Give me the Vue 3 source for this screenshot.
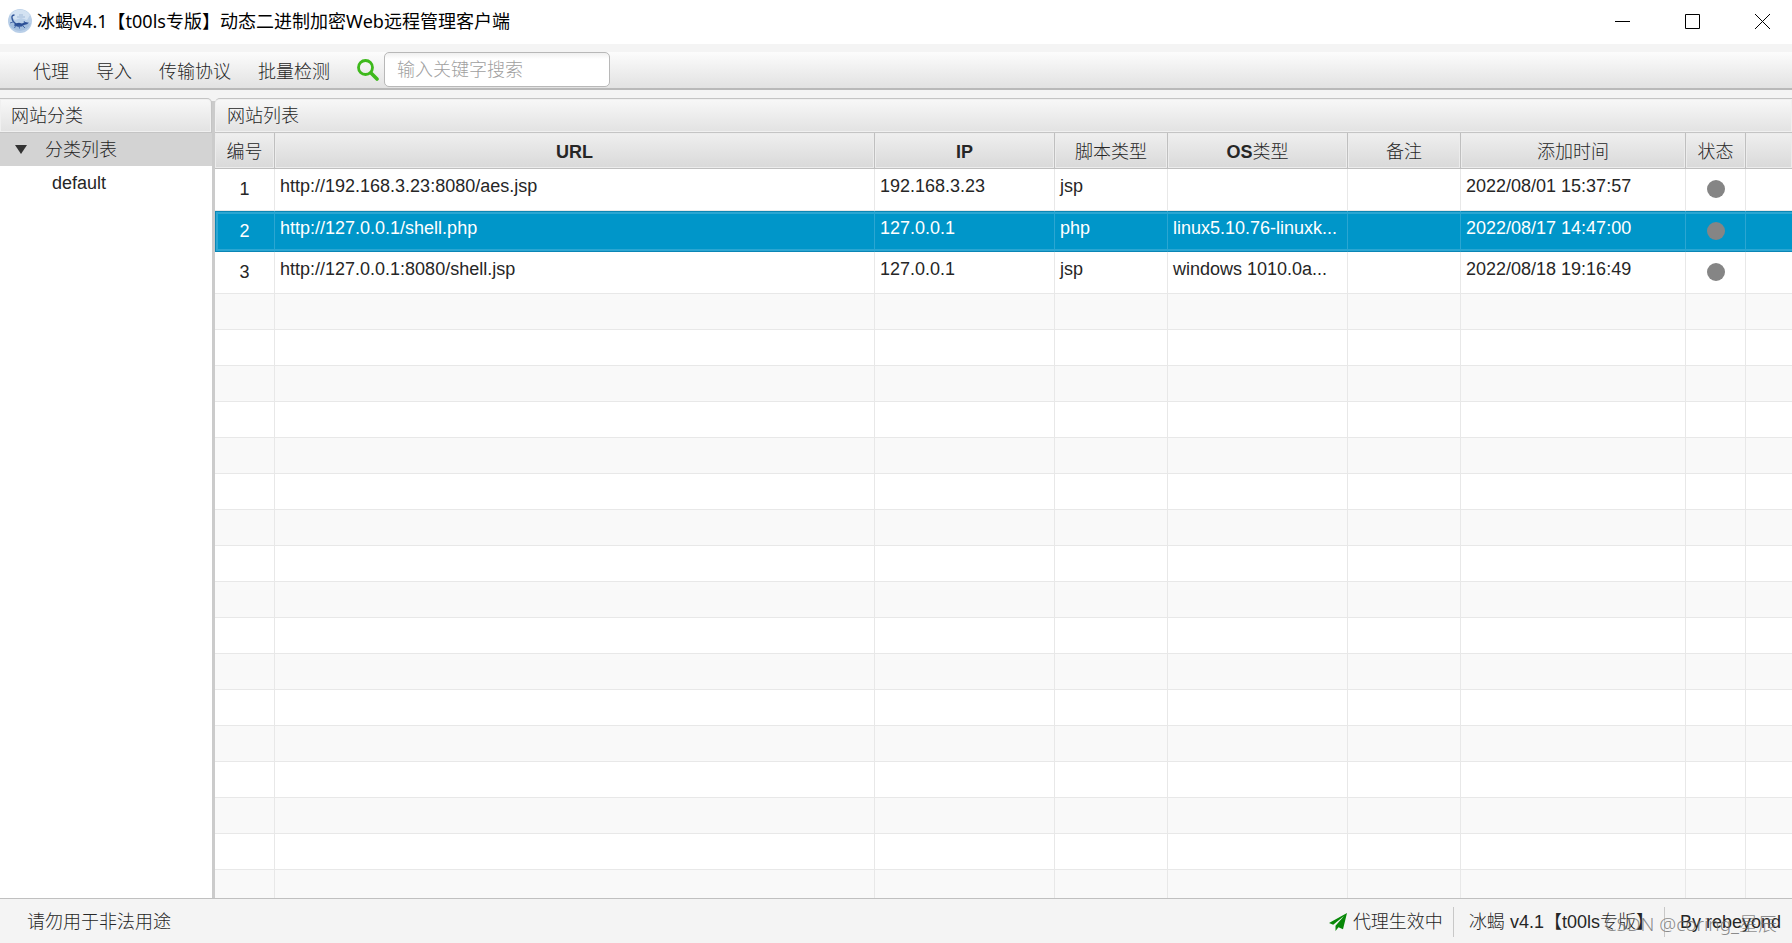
<script setup>
import { ref } from 'vue'

const menus = ['代理', '导入', '传输协议', '批量检测']
const keyword = ref('')
const selected = ref(2)

const columns = [
  { key: 'id', latin: '', text: '编号' },
  { key: 'url', latin: 'URL', text: '' },
  { key: 'ip', latin: 'IP', text: '' },
  { key: 'script', latin: '', text: '脚本类型' },
  { key: 'os', latin: 'OS', text: '类型' },
  { key: 'note', latin: '', text: '备注' },
  { key: 'time', latin: '', text: '添加时间' },
  { key: 'status', latin: '', text: '状态' },
  { key: 'rest', latin: '', text: '' }
]

const sites = [
  { id: 1, url: 'http://192.168.3.23:8080/aes.jsp', ip: '192.168.3.23', script: 'jsp', os: '', note: '', time: '2022/08/01 15:37:57' },
  { id: 2, url: 'http://127.0.0.1/shell.php', ip: '127.0.0.1', script: 'php', os: 'linux5.10.76-linuxk...', note: '', time: '2022/08/17 14:47:00' },
  { id: 3, url: 'http://127.0.0.1:8080/shell.jsp', ip: '127.0.0.1', script: 'jsp', os: 'windows 1010.0a...', note: '', time: '2022/08/18 19:16:49' }
]
const emptyRows = 17
</script>

<template>
  <div class="window">
    <header class="titlebar">
      <svg class="logo" viewBox="0 0 24 24" aria-hidden="true">
        <circle cx="12" cy="12" r="12" fill="#b9cfe8" />
        <path d="M2 6a12 12 0 0 1 20 0l-3 5-6-2-6 2z" fill="#d3e2f2" />
        <path d="M1 15q5-2 10 0t12-1a12 12 0 0 1-22 1z" fill="#a3bede" />
        <path d="M9 8h8M11 6h4" stroke="#8eabd0" stroke-width=".7" />
        <path d="M6.500 6Q3.500 6 4 9q.5 4 4 6" fill="none" stroke="#34589c" stroke-width="1.400" />
        <path d="M7 14.500l4-.8 3 .8 3-1.500 4 .8-2 1.500-3 .6-2 1.600-4 .2-4-1.200z" fill="#2b4f96" />
        <path d="M8 16l-1.500 3M11 16l.5 3.500M14 16l3 3M17 14l-1-2M5 13l-3 1" fill="none" stroke="#3b5fa2" stroke-width=".9" />
      </svg>
      <h1 class="title">冰蝎v4.1【t00ls专版】动态二进制加密Web远程管理客户端</h1>
      <div class="controls">
        <button class="control" type="button" aria-label="最小化">
          <svg viewBox="0 0 15 15"><path d="M0 7.500h15" /></svg>
        </button>
        <button class="control" type="button" aria-label="最大化">
          <svg viewBox="0 0 15 15"><path d="M.5.5h14v14H.5z" /></svg>
        </button>
        <button class="control" type="button" aria-label="关闭">
          <svg viewBox="0 0 15 15"><path d="M0 0l15 15M15 0L0 15" /></svg>
        </button>
      </div>
    </header>

    <nav class="toolbar">
      <button v-for="m in menus" :key="m" class="menu" type="button">{{ m }}</button>
      <label class="search">
        <svg class="search-icon" viewBox="0 0 22 22" role="img" aria-label="搜索">
          <circle cx="8.500" cy="8.500" r="7" fill="none" stroke="#3eb91c" stroke-width="2.800" />
          <path d="M14 14l6 6" stroke="#3eb91c" stroke-width="3.600" stroke-linecap="round" />
        </svg>
        <input v-model="keyword" class="search-input" type="text" placeholder="输入关键字搜索" />
      </label>
    </nav>

    <main class="content">
      <aside class="pane categories">
        <h2 class="pane-title">网站分类</h2>
        <ul class="tree">
          <li>
            <div class="tree-row root">
              <svg class="arrow" viewBox="0 0 12 9" aria-hidden="true"><path d="M0 0h12L6 9z" fill="#333" /></svg>
              <span>分类列表</span>
            </div>
            <ul class="tree">
              <li class="tree-row leaf">default</li>
            </ul>
          </li>
        </ul>
      </aside>

      <section class="pane sites">
        <h2 class="pane-title">网站列表</h2>
        <div class="table-area">
          <table>
            <colgroup>
              <col v-for="c in columns" :key="c.key" :class="'col-' + c.key" />
            </colgroup>
            <thead>
              <tr>
                <th v-for="c in columns" :key="c.key" scope="col"><b v-if="c.latin">{{ c.latin }}</b>{{ c.text }}</th>
              </tr>
            </thead>
            <tbody>
              <tr v-for="s in sites" :key="s.id" class="site" :class="{ selected: s.id === selected }" @click="selected = s.id">
                <td class="middle">{{ s.id }}</td>
                <td>{{ s.url }}</td>
                <td>{{ s.ip }}</td>
                <td>{{ s.script }}</td>
                <td>{{ s.os }}</td>
                <td>{{ s.note }}</td>
                <td>{{ s.time }}</td>
                <td class="middle"><span class="dot"></span></td>
                <td></td>
              </tr>
              <tr v-for="n in emptyRows" :key="'e' + n" class="empty">
                <td v-for="c in columns" :key="c.key"></td>
              </tr>
            </tbody>
          </table>
        </div>
      </section>
    </main>

    <footer class="statusbar">
      <span class="notice">请勿用于非法用途</span>
      <span class="proxy">
        <svg class="plane" viewBox="0 0 18 18" aria-hidden="true">
          <path d="M18 0L0 10l4.200 1.800L15 3 6.500 12.800V18l3-3.800 4.500 2z" fill="#078807" />
        </svg>
        代理生效中
      </span>
      <span class="version">冰蝎 v4.1【t00ls专版】</span>
      <span class="author">By rebeyond</span>
      <span class="watermark">CSDN @coring_星辰</span>
    </footer>
  </div>
</template>

<style>
body {
  margin: 0;
}
</style>

<style scoped>
* {
  box-sizing: border-box;
}

.window {
  display: flex;
  flex-direction: column;
  height: 100vh;
  overflow: hidden;
  background: #f4f4f4;
  color: #262626;
  font: 300 18px/24px "Liberation Sans", "Noto Sans CJK SC", sans-serif;
}

button,
input {
  color: inherit;
  font: inherit;
}

h1,
h2 {
  margin: 0;
  font-size: 18px;
}

.titlebar {
  display: flex;
  align-items: center;
  height: 44px;
  padding: 0 0 2px 8px;
  background: #fff;
}

.logo {
  width: 24px;
  height: 24px;
}

.title {
  margin-left: 5px;
  color: #000;
  font-family: "Noto Sans", "Noto Sans CJK SC", sans-serif;
  font-weight: 400;
  font-kerning: none;
  white-space: nowrap;
}

.controls {
  display: flex;
  gap: 10px;
  margin-left: auto;
}

.control {
  display: grid;
  place-items: center;
  width: 60px;
  height: 42px;
  padding: 0;
  border: 0;
  background: none;
}

.control svg {
  width: 15px;
  height: 15px;
  fill: none;
  stroke: #000;
}

.toolbar {
  display: flex;
  align-items: flex-start;
  gap: 27px;
  height: 38px;
  margin: 8px 0;
  padding-left: 33px;
  border-bottom: 2px solid #b9b9b9;
  background: linear-gradient(#fcfcfc, #e2e2e2);
}

.menu {
  height: 36px;
  padding: 3px 0 0;
  border: 0;
  background: none;
}

.search {
  display: flex;
  align-items: center;
  gap: 5px;
}

.search-icon {
  width: 22px;
  height: 22px;
}

.search-input {
  width: 226px;
  height: 35px;
  padding: 2px 12px 0;
  border: 1px solid #b8b8b8;
  border-radius: 5px;
  outline: 0;
  background: linear-gradient(#f0f0f0, #fff 6px);
}

.search-input::placeholder {
  color: #a0a0a0;
  opacity: 1;
}

.content {
  display: flex;
  flex: 1;
  gap: 3px;
  min-height: 0;
  background: linear-gradient(#f4f4f4 3px, #cbcbcb 3px);
}

.pane {
  display: flex;
  flex-direction: column;
  min-height: 0;
}

.categories {
  width: 212px;
}

.sites {
  flex: 1;
  min-width: 0;
}

.pane-title {
  height: 35px;
  padding: 5px 11px 0;
  border: 1px solid #c4c4c4;
  border-left-width: 0;
  border-radius: 0 5px 0 0;
  background: linear-gradient(#f8f8f8, #e2e2e2);
  box-shadow: inset 0 0 0 1px #f0f0f0;
  font-weight: 300;
}

.sites .pane-title {
  padding-left: 12px;
  border-right-width: 0;
  border-radius: 5px 0 0 0;
}

.tree {
  margin: 0;
  padding: 0;
  list-style: none;
}

.categories > .tree {
  flex: 1;
  background: #fff;
}

.tree-row {
  display: flex;
  align-items: center;
  height: 33px;
}

.root {
  gap: 18px;
  padding-left: 15px;
  background: #d3d3d3;
}

.arrow {
  width: 12px;
  height: 9px;
}

.leaf {
  padding-left: 52px;
}

.table-area {
  flex: 1;
  min-height: 0;
  overflow: hidden;
  background: #fff;
}

table {
  width: 100%;
  border-spacing: 0;
  table-layout: fixed;
}

.col-id,
.col-status {
  width: 60px;
}

.col-url {
  width: 600px;
}

.col-ip,
.col-os {
  width: 180px;
}

.col-script,
.col-note {
  width: 113px;
}

.col-time {
  width: 225px;
}

th {
  height: 36px;
  padding: 2px 0 0;
  border-right: 1px solid #bfbfbf;
  border-bottom: 1px solid #bfbfbf;
  background: linear-gradient(#efefef, #d9d9d9);
  box-shadow: inset 0 0 0 1px #ececec;
  font-weight: 300;
}

th b {
  font-weight: 700;
}

td {
  height: 36px;
  padding: 0 5px;
  overflow: hidden;
  border-right: 1px solid #e8e8e8;
  border-bottom: 1px solid #e8e8e8;
  vertical-align: top;
  white-space: nowrap;
}

th:last-child,
td:last-child {
  border-right: 0;
}

.site td {
  height: 42px;
  padding-top: 5px;
}

.site .middle {
  padding: 0 0 2px;
  text-align: center;
  vertical-align: middle;
}

.site.selected td {
  height: 41px;
  border-right-color: #2ba6d2;
  border-bottom-color: #0a86b5;
  background: #0096c9;
  box-shadow: inset 0 1px #0a86b5, inset 0 3px #2ba6d2, inset 0 -2px #2ba6d2;
  color: #fff;
}

.site.selected .middle {
  padding-bottom: 0;
}

.site.selected td:first-child {
  box-shadow: inset 0 1px #0a86b5, inset 1px 0 #0a86b5, inset 3px 3px #2ba6d2, inset 0 -2px #2ba6d2;
}

.empty:nth-child(even) td {
  background: #f9f9f9;
}

.dot {
  display: block;
  width: 18px;
  height: 18px;
  margin: 0 auto;
  border-radius: 50%;
  background: #858585;
}

.statusbar {
  position: relative;
  display: flex;
  align-items: center;
  height: 45px;
  padding: 2px 11px 0 27px;
  border-top: 1px solid #c0c0c0;
  white-space: nowrap;
}

.proxy {
  display: flex;
  align-items: center;
  gap: 6px;
  margin-left: auto;
  padding-right: 10px;
}

.plane {
  width: 18px;
  height: 18px;
}

.version,
.author {
  padding: 3px 0 3px 15px;
  border-left: 1px solid #c8c8c8;
}

.version {
  padding-right: 10px;
}

.watermark {
  position: absolute;
  right: 15px;
  bottom: 7px;
  color: rgba(110, 110, 110, 0.8);
  font-family: "Noto Sans", "Noto Sans CJK SC", sans-serif;
  font-size: 19px;
}
</style>
